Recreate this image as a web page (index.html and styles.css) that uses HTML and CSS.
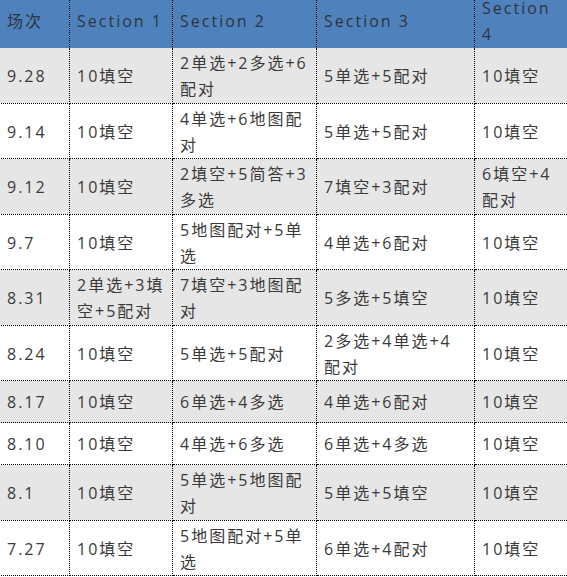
FILE: index.html
```html
<!DOCTYPE html>
<html lang="zh-CN">
<head>
<meta charset="utf-8">
<title>雅思听力场次</title>
<link rel="stylesheet" href="styles.css">
</head>
<body>
<table class="sched">
  <colgroup>
    <col class="c1"><col class="c2"><col class="c3"><col class="c4"><col class="c5">
  </colgroup>
  <thead>
    <tr><th>场次</th><th>Section 1</th><th>Section 2</th><th>Section 3</th><th>Section 4</th></tr>
  </thead>
  <tbody>
    <tr class="alt"><td>9.28</td><td>10填空</td><td>2单选+2多选+6配对</td><td>5单选+5配对</td><td>10填空</td></tr>
    <tr><td>9.14</td><td>10填空</td><td>4单选+6地图配对</td><td>5单选+5配对</td><td>10填空</td></tr>
    <tr class="alt"><td>9.12</td><td>10填空</td><td>2填空+5简答+3多选</td><td>7填空+3配对</td><td>6填空+4配对</td></tr>
    <tr><td>9.7</td><td>10填空</td><td>5地图配对+5单选</td><td>4单选+6配对</td><td>10填空</td></tr>
    <tr class="alt"><td>8.31</td><td>2单选+3填空+5配对</td><td>7填空+3地图配对</td><td>5多选+5填空</td><td>10填空</td></tr>
    <tr><td>8.24</td><td>10填空</td><td>5单选+5配对</td><td>2多选+4单选+4配对</td><td>10填空</td></tr>
    <tr class="alt"><td>8.17</td><td>10填空</td><td>6单选+4多选</td><td>4单选+6配对</td><td>10填空</td></tr>
    <tr><td>8.10</td><td>10填空</td><td>4单选+6多选</td><td>6单选+4多选</td><td>10填空</td></tr>
    <tr class="alt"><td>8.1</td><td>10填空</td><td>5单选+5地图配对</td><td>5单选+5填空</td><td>10填空</td></tr>
    <tr><td>7.27</td><td>10填空</td><td>5地图配对+5单选</td><td>6单选+4配对</td><td>10填空</td></tr>
  </tbody>
</table>
</body>
</html>
```
FILE: styles.css
```css
html, body {
  margin: 0;
  padding: 0;
  overflow: hidden;
  background: #ffffff;
}

.sched {
  border-collapse: collapse;
  table-layout: fixed;
  width: 571px;
  margin: -16px 0 0 -1px;
  font-family: "Open Sans", "Noto Sans CJK SC", sans-serif;
  font-size: 16px;
  letter-spacing: 2px;
  line-height: 26.25px;
  color: #3a3a3a;
}

.c1 { width: 70px; }
.c2 { width: 103px; }
.c3 { width: 144px; }
.c4 { width: 158px; }
.c5 { width: 96px; }

.sched th,
.sched td {
  border: 1px dotted #000;
  padding: 2px 6px 0 7px;
  text-align: left;
  vertical-align: middle;
  word-break: break-all;
}

.sched th {
  background: #4f81bd;
  color: #2e3440;
  font-weight: normal;
  line-height: 26px;
  padding-top: 10px;
  height: 52px;
  border-bottom: 1px solid #4f81bd;
  border-top: 1px solid #4f81bd;
}

.sched td {
  height: 39px;
}

.sched tr.alt td {
  background: #e7e6e6;
}
```
